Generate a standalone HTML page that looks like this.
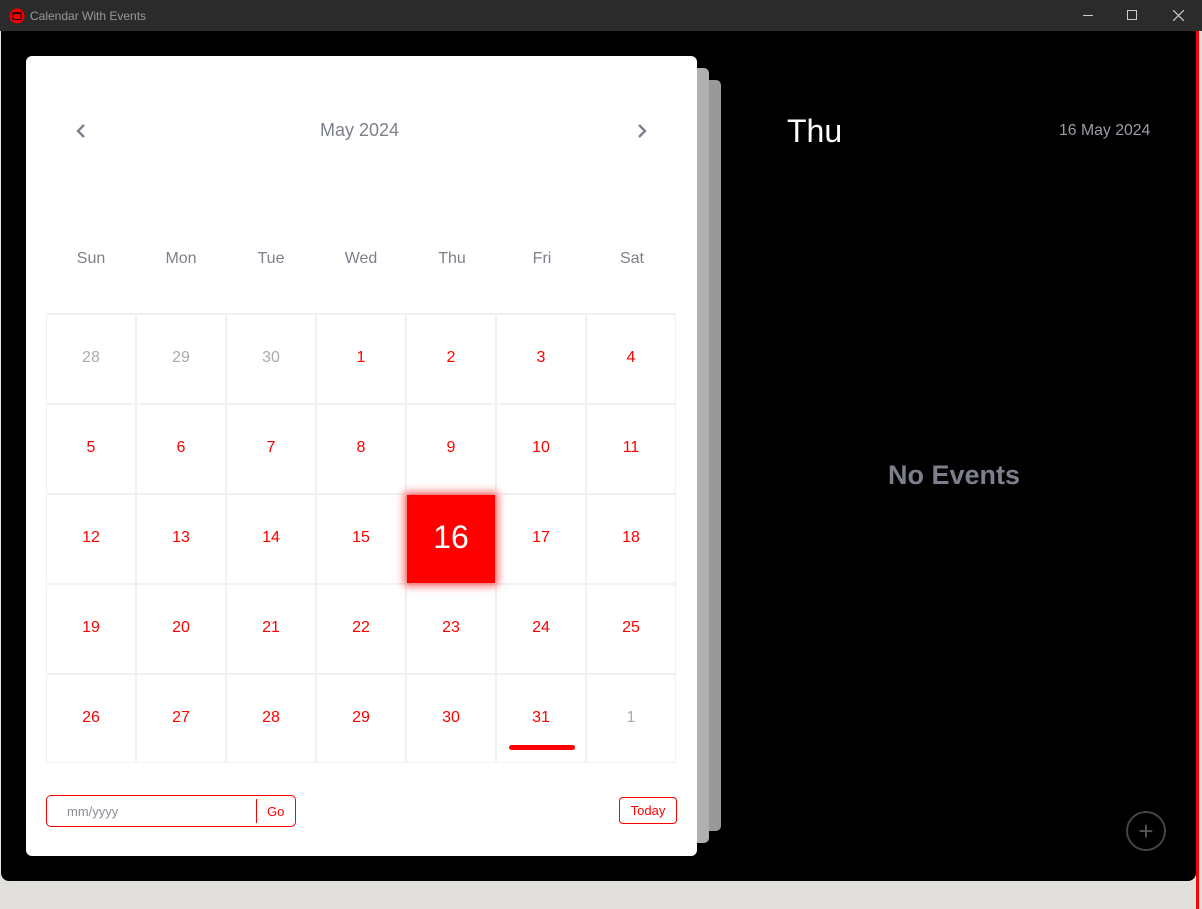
<!DOCTYPE html>
<html><head><meta charset="utf-8"><style>
*{margin:0;padding:0;box-sizing:border-box}
body{width:1202px;height:909px;background:#e1e0dc;font-family:"Liberation Sans",sans-serif;position:relative;overflow:hidden}
.title{position:absolute;left:0;top:0;width:1202px;height:31px;background:#2b2b2b;color:#9a9a9a;font-size:12px}
.title .t{position:absolute;left:30px;top:9px}
.main{position:absolute;left:1px;top:31px;width:1195px;height:850px;background:#000;border-radius:0 0 8px 8px}
.red{position:absolute;left:1196px;top:31px;width:3px;height:878px;background:#f00}
.l2{position:absolute;left:697px;top:80px;width:24px;height:751px;background:#999;border-radius:5px}
.l1{position:absolute;left:690px;top:68px;width:19px;height:775px;background:#b0b0b0;border-radius:5px}
.card{position:absolute;left:26px;top:56px;width:671px;height:800px;background:#fff;border-radius:6px}
.hdr{position:absolute;top:120px;font-size:18px;color:#7d808c}
.wd{position:absolute;top:250px;width:90px;text-align:center;font-size:16px;color:#7d808c}
.grid{position:absolute;left:46px;top:313px;display:grid;grid-template-columns:repeat(7,88px);grid-template-rows:88px 88px 88px 88px 87px;gap:2px;padding:2px 1px 1px 1px;background:#f1f1f1}
.grid div{background:#fff;color:#f00;font-size:16px;display:flex;align-items:center;justify-content:center;padding-bottom:2px}
.grid div.o{color:#aaa}
.grid div.s{background:#f00;color:#fff;font-size:32px;box-shadow:0 0 8px 3px rgba(255,0,0,.6);position:relative;z-index:2;padding-bottom:4px}
</style></head><body>
<div class="title"><svg style="position:absolute;left:9px;top:8px" width="16" height="16" viewBox="0 0 16 16"><circle cx="8" cy="8" r="7.5" fill="#e00"/><rect x="3.5" y="4" width="9" height="8" fill="#200"/><rect x="4.5" y="6" width="7" height="5" fill="#e00"/></svg><span class="t">Calendar With Events</span>
<span style="position:absolute;left:1083px;top:15px;width:10px;height:1px;background:#ccc"></span>
<span style="position:absolute;left:1127px;top:10px;width:10px;height:10px;border:1px solid #ccc"></span>
<svg style="position:absolute;left:1173px;top:10px" width="11" height="11"><path d="M0 0L11 11M11 0L0 11" stroke="#ccc" stroke-width="1.2"/></svg></div>
<div class="main"></div>
<div class="red"></div>
<div class="l2"></div><div class="l1"></div>
<div class="card"></div>
<svg style="position:absolute;left:75px;top:123px" width="12" height="16"><path d="M9 2 L3 8 L9 14" stroke="#7d808c" stroke-width="2.4" fill="none"/></svg>
<svg style="position:absolute;left:636px;top:123px" width="12" height="16"><path d="M3 2 L9 8 L3 14" stroke="#7d808c" stroke-width="2.4" fill="none"/></svg>
<div class="hdr" style="left:320px">May 2024</div>
<div class="wd" style="left:46px">Sun</div><div class="wd" style="left:136px">Mon</div><div class="wd" style="left:226px">Tue</div><div class="wd" style="left:316px">Wed</div><div class="wd" style="left:407px">Thu</div><div class="wd" style="left:497px">Fri</div><div class="wd" style="left:587px">Sat</div>
<div class="grid">
<div class="o">28</div><div class="o">29</div><div class="o">30</div><div>1</div><div>2</div><div>3</div><div>4</div>
<div>5</div><div>6</div><div>7</div><div>8</div><div>9</div><div>10</div><div>11</div>
<div>12</div><div>13</div><div>14</div><div>15</div><div class="s">16</div><div>17</div><div>18</div>
<div>19</div><div>20</div><div>21</div><div>22</div><div>23</div><div>24</div><div>25</div>
<div>26</div><div>27</div><div>28</div><div>29</div><div>30</div><div>31</div><div class="o">1</div>
</div>
<div style="position:absolute;left:509px;top:745px;width:66px;height:5px;background:#f00;border-radius:3px"></div>
<div style="position:absolute;left:46px;top:795px;width:250px;height:32px;border:1px solid #f00;border-radius:5px;font-size:13px">
<span style="position:absolute;left:20px;top:8px;color:#8a8c96">mm/yyyy</span>
<span style="position:absolute;left:209px;top:3px;width:1px;height:24px;background:#f00"></span>
<span style="position:absolute;left:220px;top:8px;color:#f00">Go</span></div>
<div style="position:absolute;left:619px;top:797px;width:58px;height:27px;border:1px solid #f00;border-radius:4px;font-size:13px;color:#f00;text-align:center;line-height:25px">Today</div>
<div style="position:absolute;left:787px;top:113px;font-size:32px;color:#fff">Thu</div>
<div style="position:absolute;left:1059px;top:122px;font-size:15.8px;color:#9a9ca6">16 May 2024</div>
<div style="position:absolute;left:888px;top:460px;font-size:27px;font-weight:bold;color:#7d808c">No Events</div>
<div style="position:absolute;left:1126px;top:811px;width:40px;height:40px;border:2px solid #444;border-radius:50%;color:#555;font-size:26px;text-align:center;line-height:36px">+</div>
</body></html>
